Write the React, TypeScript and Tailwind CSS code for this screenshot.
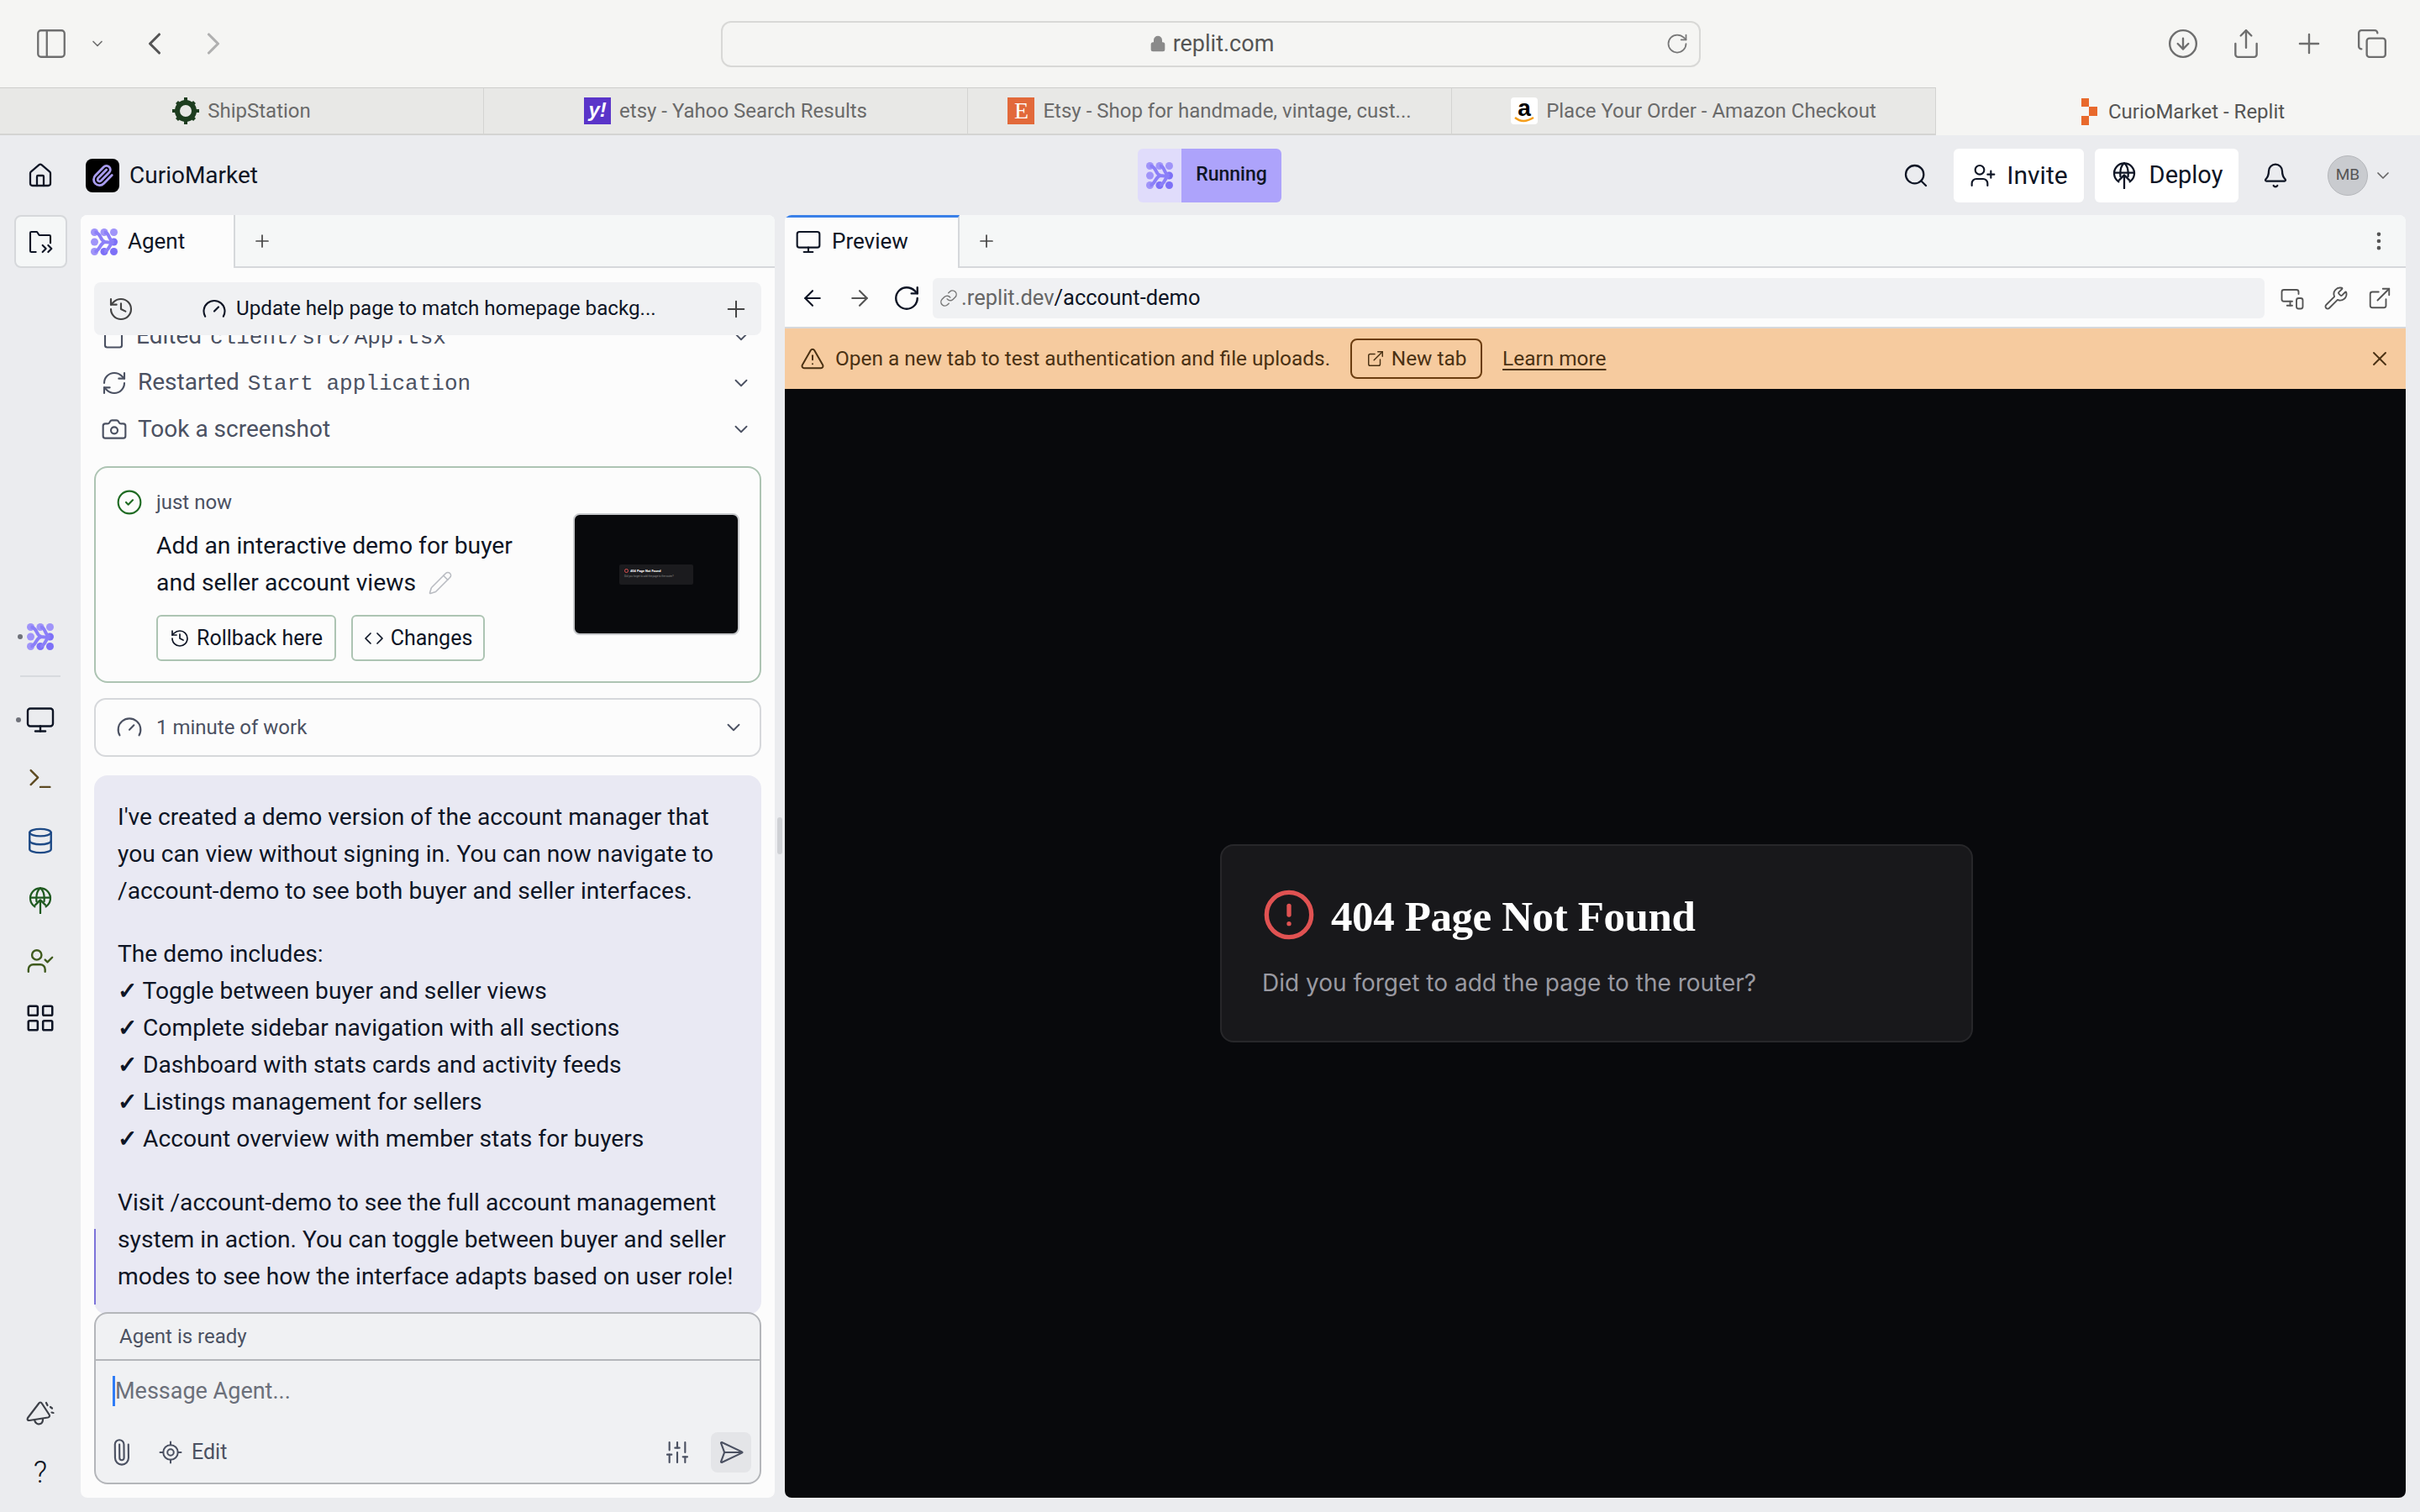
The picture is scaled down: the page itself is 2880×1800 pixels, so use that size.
import { ArrowLeft, ArrowRight, Bell, Camera, ChevronDown, ChevronLeft, ChevronRight, CircleAlert, CircleArrowDown, CircleCheck, Code, Copy, Database, EllipsisVertical, ExternalLink, File, Gauge, History, Home, LayoutGrid, Link, LocateFixed, Lock, Monitor, MonitorSmartphone, Paperclip, PanelLeft, Pencil, Plus, RefreshCw, RotateCw, Search, SendHorizontal, Share, SlidersVertical, Terminal, TriangleAlert, UserCheck, UserPlus, Wrench, X } from 'lucide-react'

function AgentMark({ size = 32 }: { size?: number }) {
  return (
    <svg width={size} height={size} viewBox="0 0 32 32" fill="#8b7ff8">
      {[4.5, 16, 27.5].map((x) => [4.5, 16, 27.5].map((y) => (x === 16 && y === 16 ? null : <circle key={`${x}-${y}`} cx={x} cy={y} r="4.5" fill={x + y > 32 ? '#7d70f7' : '#a094f9'} />)))}
      <path d="M4.5 4.5C13 5 10 14 17 16c5 1 8 0 10.5 0M16 4.5c7 0 4 9 11.5 11.5M4.5 27.5C11 27 10 18 17 16M16 27.5c7-1 5-9 11.5-11.5" stroke="#8b7ff8" strokeWidth="4" fill="none" />
    </svg>
  )
}

function DeployGlobe({ size = 32, color = 'currentColor' }: { size?: number; color?: string }) {
  return (
    <svg width={size} height={size} viewBox="0 0 24 24" fill="none" stroke={color} strokeWidth="1.7" strokeLinecap="round" strokeLinejoin="round">
      <path d="M7 17.5a9 9 0 1 1 10 0" />
      <path d="M3.2 9.5h17.6M12 0.8c-3 2.5-4 6-3.4 12M12 0.8c3 2.5 4 6 3.4 12" />
      <path d="M12 23.5V11.5M7.5 16l4.5-4.5 4.5 4.5" />
    </svg>
  )
}

function BrowserTab({ icon, label }: { icon: React.ReactNode; label: string }) {
  return (
    <div className="w-[576px] h-full flex items-center justify-center gap-[10px] border-r border-[#d3d3d1] bg-[#e8e8e6] border-t border-t-[#cfcfcd] text-[24px] text-[#6a6a6a] whitespace-nowrap">
      {icon}
      <span>{label}</span>
    </div>
  )
}

function SafariBar() {
  return (
    <>
      <div className="h-[104px] bg-[#f5f5f3] flex items-center shrink-0 text-[#6e6e6e]">
        <div className="w-[858px] flex items-center pl-[40px]">
          <PanelLeft className="w-[42px] h-[42px]" strokeWidth={1.3} />
          <ChevronDown className="w-[20px] h-[20px] ml-[24px]" strokeWidth={2} />
          <ChevronLeft className="w-[44px] h-[44px] ml-[36px] text-[#555]" strokeWidth={1.7} />
          <ChevronRight className="w-[44px] h-[44px] ml-[26px] text-[#b0b0b0]" strokeWidth={1.7} />
        </div>
        <div className="w-[1166px] h-[55px] border-2 border-[#d8d8d6] rounded-[12px] flex items-center relative">
          <div className="flex-1 flex items-center justify-center gap-[8px] text-[27px] text-[#555] pl-[42px]">
            <Lock className="w-[20px] h-[24px] text-[#8a8a8a]" fill="#8a8a8a" />
            <span>replit.com</span>
          </div>
          <RotateCw className="w-[28px] h-[28px] mr-[12px] text-[#777]" strokeWidth={1.5} />
        </div>
        <div className="flex-1 flex items-center justify-end gap-[37px] pr-[38px]">
          <CircleArrowDown className="w-[38px] h-[38px]" strokeWidth={1.5} />
          <Share className="w-[38px] h-[38px]" strokeWidth={1.5} />
          <Plus className="w-[38px] h-[38px]" strokeWidth={1.5} />
          <Copy className="w-[38px] h-[38px]" strokeWidth={1.5} />
        </div>
      </div>
      <div className="h-[57px] flex shrink-0 border-b-2 border-[#d4d4d2] bg-[#f5f5f3]">
        <BrowserTab
          label="ShipStation"
          icon={
            <svg width="32" height="32" viewBox="0 0 32 32">
              <circle cx="16" cy="16" r="10" fill="none" stroke="#1d3d1f" strokeWidth="6" />
              <path d="M14 0h4v5h-4zM14 27h4v5h-4zM0 14h5v4H0zM27 14h5v4h-5zM4 7l3-3 4 4-3 3zM25 4l3 3-4 4-3-3zM4 25l4-4 3 3-4 4zM24 21l4 4-3 3-4-4z" fill="#1d3d1f" />
            </svg>
          }
        />
        <BrowserTab
          label="etsy - Yahoo Search Results"
          icon={<div className="w-[32px] h-[32px] bg-[#5a34c9] text-white font-bold text-[24px] leading-[30px] text-center font-['Liberation_Sans',sans-serif] italic">y!</div>}
        />
        <BrowserTab
          label="Etsy - Shop for handmade, vintage, cust..."
          icon={<div className="w-[32px] h-[32px] bg-[#e2693a] text-white text-[28px] leading-[32px] text-center font-['Liberation_Serif',serif]">E</div>}
        />
        <BrowserTab
          label="Place Your Order - Amazon Checkout"
          icon={
            <div className="w-[32px] h-[32px] bg-white rounded-[4px] flex flex-col items-center relative">
              <span className="text-[28px] leading-[26px] font-bold text-black font-['Liberation_Sans',sans-serif]">a</span>
              <svg width="26" height="8" viewBox="0 0 26 8" className="absolute bottom-[1px]">
                <path d="M2 1c6 5 14 5 22 0" stroke="#f59e1b" strokeWidth="2.4" fill="none" />
              </svg>
            </div>
          }
        />
        <div className="flex-1 flex items-center justify-center gap-[12px] pl-[12px] text-[24px] text-[#555] whitespace-nowrap bg-[#f5f5f3] -mb-[2px]">
          <svg width="20" height="32" viewBox="0 0 20 32" fill="#e8692c">
            <path d="M0 0h9v10H0zM9 10h10v11H9zM0 21h9v11H0z" />
          </svg>
          <span>CurioMarket - Replit</span>
        </div>
      </div>
    </>
  )
}

function TopBar() {
  return (
    <div className="h-[95px] flex items-center shrink-0 text-[#0e1525]">
      <div className="w-[1354px] flex items-center pl-[32px]">
        <Home className="w-[32px] h-[32px]" strokeWidth={1.7} />
        <div className="ml-[38px] w-[40px] h-[40px] rounded-[8px] bg-black flex items-center justify-center">
          <Paperclip className="w-[28px] h-[28px] text-[#a99cf0]" strokeWidth={2.4} />
        </div>
        <span className="ml-[12px] text-[28px]">CurioMarket</span>
      </div>
      <div className="w-[171px] h-[64px] flex rounded-[6px] overflow-hidden">
        <div className="w-[52px] bg-[#e0dcfb] flex items-center justify-center">
          <AgentMark />
        </div>
        <div className="flex-1 bg-[#ada3fb] flex items-center justify-center text-[23px] font-medium">Running</div>
      </div>
      <div className="flex-1 flex items-center justify-end pr-[32px]">
        <Search className="w-[32px] h-[32px]" strokeWidth={1.7} />
        <button className="ml-[29px] w-[155px] h-[64px] bg-white rounded-[6px] flex items-center justify-center gap-[12px] text-[30px]">
          <UserPlus className="w-[32px] h-[32px]" strokeWidth={1.6} />
          Invite
        </button>
        <button className="ml-[13px] w-[171px] h-[64px] bg-white rounded-[6px] flex items-center justify-center gap-[14px] text-[29px]">
          <DeployGlobe />
          Deploy
        </button>
        <Bell className="ml-[28px] w-[32px] h-[32px]" strokeWidth={1.7} />
        <div className="ml-[46px] w-[48px] h-[48px] rounded-full bg-[#c9cbcf] border border-[#b5b7bb] flex items-center justify-center text-[19px] text-[#555]">MB</div>
        <ChevronDown className="ml-[6px] w-[24px] h-[24px] text-[#666]" strokeWidth={1.7} />
      </div>
    </div>
  )
}

function Rail() {
  const dot = <span className="absolute -left-[11px] top-1/2 -translate-y-1/2 w-[6px] h-[6px] rounded-full bg-[#6f727a]" />
  return (
    <div className="w-[96px] shrink-0 flex flex-col items-center pb-[10px] text-[#0e1525]">
      <div className="w-[63px] h-[63px] rounded-[8px] bg-[#f5f7f7] border-2 border-[#d6d8db] flex items-center justify-center">
        <svg width="32" height="32" viewBox="0 0 24 24" fill="none" stroke="currentColor" strokeWidth="1.6" strokeLinecap="round" strokeLinejoin="round">
          <path d="M8 21H4a1 1 0 0 1-1-1V4a1 1 0 0 1 1-1h5l2 3h9a1 1 0 0 1 1 1v6" />
          <path d="M14 15l3 3-3 3M19 15l3 3-3 3" />
        </svg>
      </div>
      <div className="relative mt-[423px]">
        {dot}
        <AgentMark />
      </div>
      <div className="w-[48px] h-[2px] bg-[#d8dade] mt-[30px]" />
      <div className="relative mt-[33px]">
        {dot}
        <Monitor className="w-[36px] h-[36px]" strokeWidth={1.6} />
      </div>
      <Terminal className="mt-[35px] w-[34px] h-[34px] text-[#5d4a22]" strokeWidth={1.7} />
      <Database className="mt-[40px] w-[34px] h-[34px] text-[#1e4a86]" strokeWidth={1.7} />
      <div className="mt-[38px]">
        <DeployGlobe color="#1f5a20" />
      </div>
      <UserCheck className="mt-[39px] w-[34px] h-[34px] text-[#3f5a1d]" strokeWidth={1.7} />
      <LayoutGrid className="mt-[32px] w-[38px] h-[38px]" strokeWidth={1.6} />
      <svg width="36" height="36" viewBox="0 0 36 36" fill="none" stroke="#3d4048" strokeWidth="2.2" strokeLinecap="round" strokeLinejoin="round" className="mt-auto">
        <path d="M16 4 3 21c-1 2 0 3 2 3l22-3.500c2-.5 2.500-2 1.500-3.500L20 4c-1-2-3-2-4 0Z" />
        <path d="M11 23.500c1 4 4 5.500 7 4.500 2-.7 3-2.500 3-5.500" />
        <path d="M25 3l1.500 3M30 8l2 1.500M31.500 14.500l2 .5" />
      </svg>
      <span className="mt-[30px] text-[36px] leading-[40px] font-light">?</span>
    </div>
  )
}

function ChatRow({ icon, children }: { icon: React.ReactNode; children: React.ReactNode }) {
  return (
    <div className="h-[55px] shrink-0 flex items-center gap-[12px] pl-[8px] pr-[11px] text-[28px] text-[#4b5162] whitespace-nowrap">
      {icon}
      <span className="flex-1">{children}</span>
      <ChevronDown className="w-[26px] h-[26px]" strokeWidth={1.7} />
    </div>
  )
}

function AgentPanel() {
  return (
    <div className="w-[826px] shrink-0 bg-[#fcfcfc] rounded-[8px] flex flex-col overflow-hidden text-[#0e1525]">
      <div className="h-[63px] shrink-0 flex bg-[#f5f7f7]">
        <div className="w-[184px] bg-[#fcfcfc] border-r-2 border-[#d6d8db] flex items-center pl-[12px] gap-[12px] text-[26px]">
          <AgentMark />
          Agent
        </div>
        <div className="flex-1 border-b-2 border-[#d6d8db] flex items-center pl-[20px]">
          <Plus className="w-[24px] h-[24px] text-[#444]" strokeWidth={1.7} />
        </div>
      </div>
      <div className="mx-[16px] mt-[17px] h-[63px] shrink-0 bg-[#f0f1f3] rounded-[8px] flex items-center pl-[16px] pr-[14px] z-10">
        <History className="w-[32px] h-[32px] text-[#444]" strokeWidth={1.6} />
        <Gauge className="ml-[80px] w-[30px] h-[30px]" strokeWidth={1.7} />
        <span className="ml-[11px] text-[24.2px] flex-1 whitespace-nowrap">Update help page to match homepage backg...</span>
        <Plus className="w-[32px] h-[32px] text-[#444]" strokeWidth={1.5} />
      </div>
      <div className="flex-1 min-h-0 overflow-hidden flex flex-col justify-end px-[16px]">
        <ChatRow icon={<File className="w-[30px] h-[30px]" strokeWidth={1.7} />}>
          Edited <span className="ml-[3px] font-['Liberation_Mono',monospace] text-[26px]">client/src/App.tsx</span>
        </ChatRow>
        <ChatRow icon={<RefreshCw className="w-[32px] h-[32px]" strokeWidth={1.6} />}>
          Restarted <span className="ml-[3px] font-['Liberation_Mono',monospace] text-[26px]">Start application</span>
        </ChatRow>
        <ChatRow icon={<Camera className="w-[32px] h-[32px]" strokeWidth={1.6} />}>Took a screenshot</ChatRow>

        <div className="mt-[17px] h-[258px] shrink-0 border-2 border-[#adc4b3] rounded-[16px] flex justify-between pl-[24px] pr-[24px] pt-[25px]">
          <div className="flex flex-col">
            <div className="flex items-center gap-[16px] text-[24px] text-[#4b5162] h-[32px]">
              <CircleCheck className="w-[32px] h-[32px] text-[#1f6b23]" strokeWidth={1.6} />
              just now
            </div>
            <div className="ml-[48px] mt-[14px] text-[28.3px] leading-[44px] whitespace-nowrap">
              Add an interactive demo for buyer
              <br />
              <span className="inline-flex items-center gap-[14px]">
                and seller account views <Pencil className="w-[30px] h-[30px] text-[#b9bcc2]" strokeWidth={1.3} />
              </span>
            </div>
            <div className="ml-[48px] mt-[16px] flex gap-[18px] text-[25px]">
              <div className="h-[55px] w-[214px] border-2 border-[#adc4b3] rounded-[6px] flex items-center justify-center gap-[8px]">
                <History className="w-[24px] h-[24px]" strokeWidth={1.7} />
                Rollback here
              </div>
              <div className="h-[55px] w-[159px] border-2 border-[#adc4b3] rounded-[6px] flex items-center justify-center gap-[8px]">
                <Code className="w-[24px] h-[24px]" strokeWidth={1.7} />
                Changes
              </div>
            </div>
          </div>
          <div className="mt-[29px] w-[198px] h-[145px] bg-[#08090c] border-2 border-[#c8cacd] rounded-[8px] flex items-center justify-center">
            <div className="w-[88px] h-[24px] bg-[#1b1b1e] rounded-[2px] pl-[6px] pt-[5px] flex flex-col gap-[3px] overflow-hidden">
              <div className="flex items-center gap-[2px] text-[4px] leading-[5px] text-white font-bold whitespace-nowrap">
                <span className="w-[5px] h-[5px] rounded-full border border-[#e05050]" />
                404 Page Not Found
              </div>
              <div className="text-[3px] leading-[3px] text-[#888] whitespace-nowrap">Did you forget to add the page to the router?</div>
            </div>
          </div>
        </div>

        <div className="mt-[18px] h-[70px] shrink-0 border-2 border-[#d6d8db] rounded-[14px] flex items-center pl-[24px] pr-[18px] gap-[16px] text-[24px] text-[#4b5162]">
          <Gauge className="w-[32px] h-[32px]" strokeWidth={1.6} />
          <span className="flex-1">1 minute of work</span>
          <ChevronDown className="w-[26px] h-[26px]" strokeWidth={1.7} />
        </div>

        <div className="relative mt-[22px] h-[642px] shrink-0 bg-[#e9e9f3] rounded-[16px] px-[28px] pt-[28px] text-[28.2px] leading-[44px] whitespace-nowrap">
          <p>
            I've created a demo version of the account manager that
            <br />
            you can view without signing in. You can now navigate to
            <br />
            /account-demo to see both buyer and seller interfaces.
          </p>
          <p className="mt-[31px]">
            The demo includes:
            <br /><b>✓</b> Toggle between buyer and seller views
            <br /><b>✓</b> Complete sidebar navigation with all sections
            <br /><b>✓</b> Dashboard with stats cards and activity feeds
            <br /><b>✓</b> Listings management for sellers
            <br /><b>✓</b> Account overview with member stats for buyers
          </p>
          <p className="mt-[32px]">
            Visit /account-demo to see the full account management
            <br />
            system in action. You can toggle between buyer and seller
            <br />
            modes to see how the interface adapts based on user role!
          </p>
          <span className="absolute left-0 bottom-[12px] w-[2px] h-[90px] bg-[#7c73d9]" />
        </div>
      </div>
      <div className="relative z-10 mx-[16px] mb-[16px] -mt-[3px] h-[205px] shrink-0 bg-[#f0f1f3] border-2 border-[#b4b6ba] rounded-[16px] flex flex-col">
        <div className="h-[56px] shrink-0 border-b-2 border-[#b4b6ba] flex items-center pl-[28px] text-[24px] text-[#4b5162]">Agent is ready</div>
        <div className="flex-1 flex items-start pl-[20px] pt-[18px]">
          <span className="w-[3px] h-[36px] bg-[#2f7cf6]" />
          <span className="text-[27px] leading-[36px] text-[#6b6f7a]">Message Agent...</span>
        </div>
        <div className="h-[72px] shrink-0 flex items-center pl-[14px] pr-[10px] text-[#4b5162]">
          <Paperclip className="w-[32px] h-[32px] -rotate-45" strokeWidth={1.6} />
          <LocateFixed className="ml-[28px] w-[30px] h-[30px]" strokeWidth={1.6} />
          <span className="ml-[10px] text-[25px] flex-1">Edit</span>
          <SlidersVertical className="w-[32px] h-[32px]" strokeWidth={1.6} />
          <div className="ml-[24px] w-[48px] h-[48px] rounded-[8px] bg-[#e4e5e8] flex items-center justify-center">
            <SendHorizontal className="w-[32px] h-[32px]" strokeWidth={1.6} />
          </div>
        </div>
      </div>
    </div>
  )
}

function PreviewPanel() {
  return (
    <div className="flex-1 min-w-0 bg-[#fcfcfc] rounded-[8px] overflow-hidden flex flex-col text-[#0e1525]">
      <div className="h-[63px] shrink-0 flex bg-[#f5f7f7]">
        <div className="w-[208px] bg-[#fcfcfc] border-t-[3px] border-[#3a80e8] border-r-2 border-r-[#d6d8db] flex items-center pl-[12px] pb-[3px] gap-[12px] text-[26px]">
          <Monitor className="w-[32px] h-[32px]" strokeWidth={1.6} />
          Preview
        </div>
        <div className="flex-1 border-b-2 border-[#d6d8db] flex items-center pl-[20px] pr-[18px] justify-between">
          <Plus className="w-[24px] h-[24px] text-[#444]" strokeWidth={1.7} />
          <EllipsisVertical className="w-[28px] h-[28px] text-[#555]" strokeWidth={2} />
        </div>
      </div>
      <div className="h-[72px] shrink-0 flex items-center pl-[18px] pr-[16px] border-b-2 border-[#d6d8db] pt-[1px]">
        <ArrowLeft className="w-[30px] h-[30px]" strokeWidth={1.7} />
        <ArrowRight className="ml-[26px] w-[30px] h-[30px] text-[#555]" strokeWidth={1.7} />
        <RotateCw className="ml-[24px] w-[34px] h-[34px]" strokeWidth={1.7} />
        <div className="ml-[14px] w-[1585px] h-[48px] rounded-[6px] bg-[#f0f1f3] flex items-center pl-[8px] text-[25.5px]">
          <Link className="w-[22px] h-[22px] text-[#777]" strokeWidth={1.6} />
          <span className="ml-[4px] text-[#666]">.replit.dev</span>/account-demo
        </div>
        <div className="flex-1 flex items-center justify-end gap-[22px] text-[#555]">
          <MonitorSmartphone className="w-[30px] h-[30px]" strokeWidth={1.5} />
          <Wrench className="w-[30px] h-[30px]" strokeWidth={1.5} />
          <ExternalLink className="w-[30px] h-[30px]" strokeWidth={1.5} />
        </div>
      </div>
      <div className="h-[72px] shrink-0 bg-[#f6cb9f] flex items-center pl-[18px] pr-[17px] text-[24.4px] text-[#4a3113]">
        <TriangleAlert className="w-[30px] h-[30px]" strokeWidth={1.6} />
        <span className="ml-[12px]">Open a new tab to test authentication and file uploads.</span>
        <div className="ml-[24px] w-[157px] h-[48px] border-2 border-[#6b3d10] rounded-[8px] flex items-center justify-center gap-[8px]">
          <ExternalLink className="w-[22px] h-[22px]" strokeWidth={1.6} />
          New tab
        </div>
        <span className="ml-[24px] underline underline-offset-4">Learn more</span>
        <X className="ml-auto w-[28px] h-[28px]" strokeWidth={1.6} />
      </div>
      <div className="flex-1 bg-[#08090c] flex items-center justify-center pl-[3px]">
        <div className="w-[896px] h-[236px] bg-[#18181b] border-2 border-[#27272a] rounded-[16px] px-[48px] pt-[53px]">
          <div className="flex items-center gap-[18px] text-white font-['Liberation_Serif',serif] font-bold text-[51px] leading-[62px] tracking-[-0.4px]">
            <CircleAlert className="w-[64px] h-[64px] text-[#e05252] -mt-[4px]" strokeWidth={2} />
            404 Page Not Found
          </div>
          <p className="mt-[28px] text-[28px] leading-[40px] text-[#9a9aa2] font-['Inter',sans-serif]">Did you forget to add the page to the router?</p>
        </div>
      </div>
    </div>
  )
}

export default function App() {
  return (
    <div className="w-[2880px] h-[1800px] bg-[#ebecef] flex flex-col overflow-hidden font-['Roboto',sans-serif]">
      <SafariBar />
      <TopBar />
      <div className="flex-1 min-h-0 flex pb-[17px] pr-[17px]">
        <Rail />
        <AgentPanel />
        <div className="w-[12px] shrink-0 flex items-center justify-center">
          <span className="w-[6px] h-[44px] rounded-full bg-[#cfd1d5] -mt-[50px]" />
        </div>
        <PreviewPanel />
      </div>
    </div>
  )
}
